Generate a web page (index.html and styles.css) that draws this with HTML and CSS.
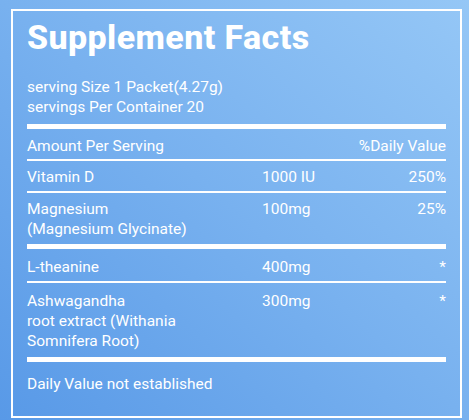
FILE: index.html
```html
<!DOCTYPE html>
<html lang="en">
  <head>
    <meta charset="UTF-8" />
    <meta name="viewport" content="width=device-width, initial-scale=1.0" />
    <title>Supplement Facts</title>
    <link rel="stylesheet" href="styles.css">
  </head>
  <body>
    <main>
      <div class="facts-box">
        <!-- Header -->
        <h1 class="facts-title">Supplement Facts</h1>
        <div class="serving">
          <p>serving Size 1 Packet(4.27g)</p>
          <p>servings Per Container 20</p>
        </div>

        <div class="bar"></div>

        <!-- Table -->
        <div class="row head-row">
          <span class="name">Amount Per Serving</span>
          <span class="amount"></span>
          <span class="dv">%Daily Value</span>
        </div>
        <div class="row">
          <span class="name">Vitamin D</span>
          <span class="amount">1000 IU</span>
          <span class="dv">250%</span>
        </div>
        <div class="row no-line">
          <span class="name">Magnesium<br>(Magnesium Glycinate)</span>
          <span class="amount">100mg</span>
          <span class="dv">25%</span>
        </div>

        <div class="bar"></div>

        <div class="row after-bar">
          <span class="name">L-theanine</span>
          <span class="amount">400mg</span>
          <span class="dv">*</span>
        </div>
        <div class="row no-line tall-row">
          <span class="name">Ashwagandha<br>root extract (Withania<br>Somnifera Root)</span>
          <span class="amount">300mg</span>
          <span class="dv">*</span>
        </div>

        <div class="bar"></div>

        <p class="footnote">Daily Value not established</p>
      </div>
    </main>
  </body>
</html>
```

FILE: styles.css
```css
body {
  font-family: Roboto, "Liberation Sans", Arial, sans-serif;
  margin: 0;
  padding: 0;
  width: 469px;
  height: 420px;
  overflow: hidden;
  color: #fff;
  background: linear-gradient(to top right, #5899e7 0%, #78b1ef 50%, #95c7f6 100%);
}

main {
  padding: 9px 0 0 11px;
}

.facts-box {
  box-sizing: border-box;
  width: 451px;
  height: 409px;
  border: 2px solid #fff;
  padding: 6px 14px 0 14px;
}

.facts-title {
  margin: 0;
  font-size: 34px;
  line-height: 40px;
  font-weight: 800;
  letter-spacing: 0.4px;
}

.serving {
  margin-top: 20px;
  margin-bottom: 7px;
  font-size: 15.5px;
  line-height: 20px;
}

.serving p {
  margin: 0;
}

/* thick divider */
.bar {
  height: 5px;
  background-color: #fff;
}

.row {
  display: grid;
  grid-template-columns: 235px 1fr auto;
  font-size: 15.5px;
  line-height: 20px;
  padding: 6px 0 4px 0;
  border-bottom: 2px solid #fff;
}

.head-row {
  padding-top: 7px;
  padding-bottom: 3px;
}

.row.after-bar {
  padding-top: 8px;
}

.row.no-line {
  border-bottom: none;
  padding-bottom: 5px;
}

.row.tall-row {
  padding-top: 8px;
  padding-bottom: 6px;
}

.dv {
  text-align: right;
}

.footnote {
  margin: 12px 0 0 0;
  font-size: 15.5px;
  line-height: 20px;
}
```
